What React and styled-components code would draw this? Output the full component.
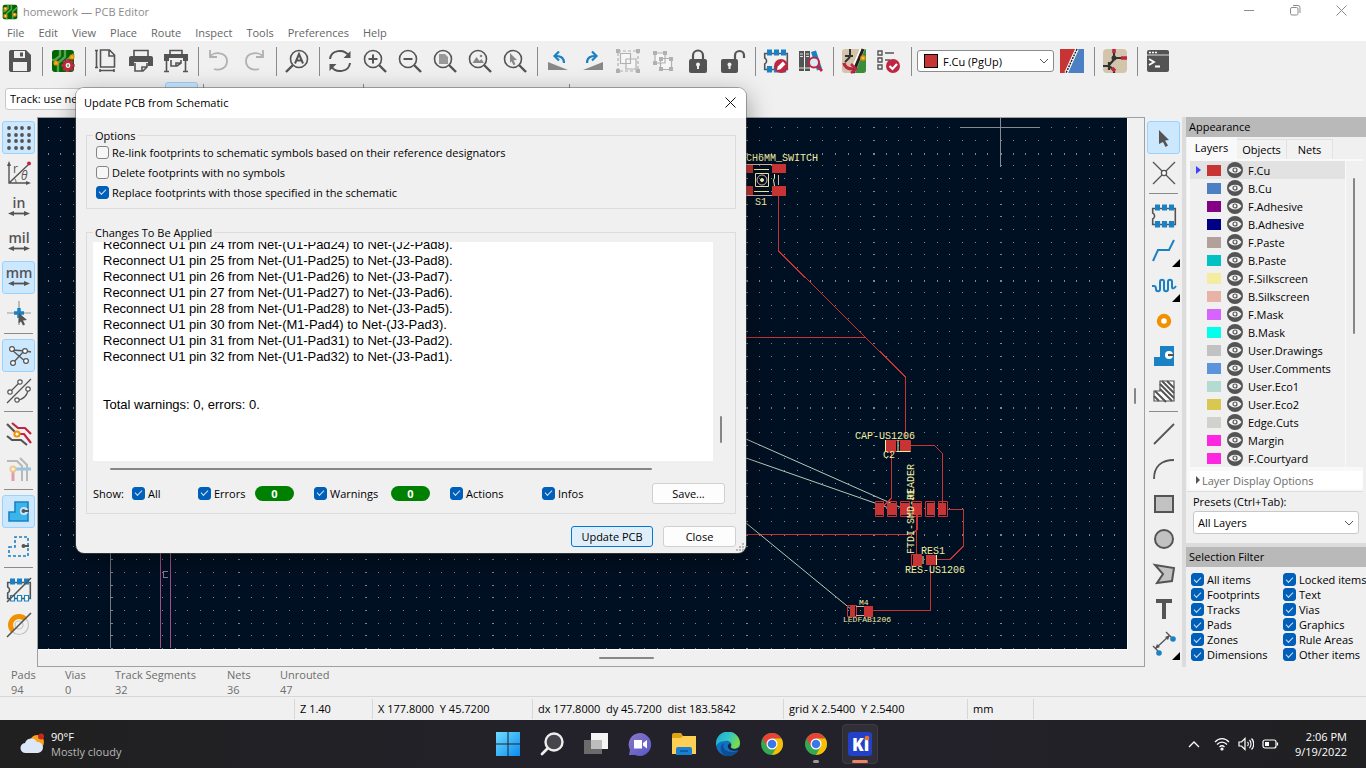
import React from "react";
import styled, { createGlobalStyle, css } from "styled-components";

const ui = `"Open Sans", "Noto Sans", "Liberation Sans", sans-serif`;
const ink = "#545454";
const blue = "#1a81c4";
const red = "#bf2641";
const orange = "#f29100";

const Global = createGlobalStyle`
  *, *::before, *::after { box-sizing: border-box; }
  body { margin: 0; background: #f0f0f0; font: 11px/15px ${ui}; color: #000; }
  button, select, input { font: inherit; color: inherit; margin: 0; }
  ul { list-style: none; margin: 0; padding: 0; }
`;

const Shell = styled.div`
  position: relative;
  display: flex;
  flex-direction: column;
  min-height: 100vh;
  overflow: hidden;
`;

/* ---------- window chrome ---------- */
const TitleBar = styled.header`
  display: flex;
  align-items: center;
  gap: 5px;
  height: 24px;
  padding: 0 2px 1px;
  background: #fff;
  color: #8c8c8c;
`;
const TitleText = styled.span`flex: 1;`;
const Caption = styled.button`
  width: 46px;
  height: 22px;
  padding: 0;
  border: 0;
  background: none;
  svg { display: block; margin: 0 auto; }
`;
const MenuBar = styled.nav`
  display: flex;
  gap: 14px;
  height: 17px;
  padding-left: 7px;
  background: #fff;
`;
const MenuItem = styled.a`
  color: #666;
  text-decoration: none;
  line-height: 17px;
`;

/* ---------- toolbars ---------- */
const TopBar = styled.div`
  display: flex;
  align-items: center;
  height: 40px;
  padding-left: 2px;
`;
const SecondBar = styled.div`
  display: flex;
  align-items: center;
  height: 36px;
  padding: 0 0 1px 5px;
`;
const SideBar = styled.div`
  display: flex;
  flex-direction: column;
  align-items: center;
  flex: none;
  width: 37px;
  padding-top: 3px;
`;
const Tool = styled.button`
  position: relative;
  display: flex;
  align-items: center;
  justify-content: center;
  flex: none;
  width: ${(p) => (p.$side ? 33 : 35)}px;
  height: ${(p) => (p.$side ? 33 : 35)}px;
  margin: ${(p) => (p.$side ? "1px 0" : 0)};
  padding: 0;
  border: 1px solid ${(p) => (p.$on ? "#99d1ff" : "transparent")};
  border-radius: 3px;
  background: ${(p) => (p.$on ? "#cce8ff" : "none")};
  opacity: ${(p) => (p.$dim ? 0.4 : 1)};
  svg { overflow: visible; }
`;
const More = styled.i`
  position: absolute;
  right: -1px;
  bottom: -1px;
  border: 4px solid #000;
  border-top-color: transparent;
  border-left-color: transparent;
`;
const Sep = styled.i`
  flex: none;
  ${(p) =>
    p.$side
      ? css`width: 29px; height: 8px; border-top: 1px solid #8b8b8b; margin: 3px 0 -3px;`
      : css`width: 8px; height: 29px; border-left: 1px solid #8b8b8b; margin: 0 -5px 0 5px;`}
`;
const Combo = styled.label`
  position: relative;
  display: flex;
  align-items: center;
  width: ${(p) => p.$w || "auto"};
  height: ${(p) => p.$h || 22}px;
  margin: ${(p) => p.$m || 0};
  padding: 0 4px;
  background: #fff;
  border: 1px solid ${(p) => p.$edge || "#c8c8c8"};
  border-radius: 3px;
  select {
    flex: 1;
    min-width: 0;
    padding: 0;
    border: 0;
    outline: 0;
    appearance: none;
    background: none;
  }
`;
const Well = styled.i`
  width: 14px;
  height: 14px;
  margin: 0 5px 0 2px;
  background: #c83434;
  border: 1px solid #000;
`;

/* ---------- work area ---------- */
const Work = styled.main`
  display: flex;
  flex: 1;
`;
const Frame = styled.section`
  display: grid;
  grid-template: minmax(0, 1fr) 17px / minmax(0, 1fr) 17px;
  flex: 1;
  min-width: 0;
  border: 1px solid #a0a0a0;
`;
const Board = styled.svg`
  display: block;
  width: 100%;
  height: 100%;
  min-height: 0;
  background: #001023;
  box-shadow: 1px 1px 0 #fff;
  contain: size;
`;
const ScrollTrack = styled.div`
  display: flex;
  align-items: center;
  justify-content: center;
  padding: ${(p) => p.$pad || 0};
`;
const Thumb = styled.i`
  width: ${(p) => p.$w || 2}px;
  height: ${(p) => p.$h || 2}px;
  border-radius: 1px;
  background: #868686;
`;

/* ---------- right panel ---------- */
const Panel = styled.aside`
  flex: none;
  width: 184px;
  border-left: 4px solid #dcdcdc;
`;
const PanelHead = styled.h2`
  height: 20px;
  margin: 0;
  padding-left: 3px;
  font: 11px/20px ${ui};
  background: #b9b9b9;
`;
const Tabs = styled.div`
  display: flex;
  align-items: flex-end;
  height: 22px;
  padding-left: 1px;
`;
const Tab = styled.button`
  height: ${(p) => (p.$on ? 22 : 20)}px;
  padding: 0 0 ${(p) => (p.$on ? 3 : 0)}px;
  width: ${(p) => p.$w}px;
  border: 1px solid ${(p) => (p.$on ? "#f9f9f9" : "#e2e2e2")};
  border-width: 1px 1px 0 0;
  background: ${(p) => (p.$on ? "#f9f9f9" : "#f2f2f2")};
`;
const Page = styled.div`
  margin: 0 3px 0 1px;
  padding: 2px 0 2px 3px;
  background: #f9f9f9;
  border-bottom: 1px solid #dcdcdc;
`;
const LayerArea = styled.div`
  display: grid;
  grid-template-columns: 1fr 17px;
  gap: 1px;
`;
const LayerTrack = styled.div`
  padding: 17px 0 0 7px;
  background: #f0f0f0;
  i { display: block; }
`;
const LayerRow = styled.li`
  display: grid;
  grid-template-columns: 17px 20px 21px 1fr;
  align-items: center;
  height: 18px;
  background: ${(p) => (p.$on ? "#e2e2e2" : "#f0f0f0")};
`;
const Pointer = styled.i`
  margin-left: 6px;
  width: 5px;
  height: 8px;
  background: #4040ff;
  clip-path: polygon(0 0, 100% 50%, 0 100%);
`;
const Swatch = styled.i`
  grid-column: 2;
  width: 14px;
  height: 11px;
  background: ${(p) => p.$c};
`;
const Eye = styled.button`
  padding: 0;
  border: 0;
  height: 16px;
  background: none;
  svg { display: block; }
`;
const Disclosure = styled.button`
  display: flex;
  align-items: center;
  gap: 2px;
  width: 100%;
  height: 18px;
  margin-top: 4px;
  padding: 0 0 0 6px;
  border: 0;
  background: #fff;
  color: #6d6d6d;
`;
const Presets = styled.div`
  padding: 2px 7px 9px 7px;
  border-bottom: 4px solid #dcdcdc;
  p { margin: 0 0 2px; }
`;
const Filters = styled.div`
  display: grid;
  grid-template-columns: 92px auto;
  padding: 5px 0 0 5px;
`;

const Check = styled.label`
  display: flex;
  align-items: center;
  gap: 3px;
  height: ${(p) => p.$h || 15}px;
  white-space: nowrap;
`;
const Box = styled.input.attrs({ type: "checkbox" })`
  appearance: none;
  display: grid;
  place-items: center;
  flex: none;
  width: 13px;
  height: 13px;
  border: 1px solid #858585;
  border-radius: 3px;
  background: #f6f6f6;
  &:checked { border-color: #005fb8; background: #005fb8; }
  &:checked::after {
    content: "";
    width: 7px;
    height: 4px;
    margin-bottom: 2px;
    border: solid #cfe3f5;
    border-width: 0 0 1px 1px;
    transform: rotate(-45deg);
  }
`;

/* ---------- dialog ---------- */
const Dialog = styled.section`
  position: absolute;
  left: 76px;
  top: 88px;
  width: 670px;
  background: #f0f0f0;
  border-radius: 8px;
  overflow: hidden;
  box-shadow: 0 0 0 1px rgba(90, 90, 90, 0.5), 0 8px 24px 2px rgba(0, 0, 0, 0.35);
`;
const DialogTitle = styled.div`
  display: flex;
  align-items: center;
  justify-content: space-between;
  height: 30px;
  padding: 0 8px 2px;
  background: #fff;
  button { width: 16px; height: 16px; padding: 0; border: 0; background: none; }
  svg { display: block; margin: 0 auto; }
`;
const Group = styled.fieldset`
  margin: ${(p) => p.$m};
  padding: 0 6px ${(p) => p.$pb}px;
  border: 1px solid #dcdcdc;
  legend { padding: 0 2px; line-height: 15px; }
`;
const Options = styled.div`
  margin-top: -1px;
  padding: 0 3px;
`;
const Report = styled.div`
  display: flex;
  flex-direction: column;
  justify-content: flex-end;
  height: 219px;
  padding: 0 10px 48px;
  overflow: hidden;
  background: #fff;
  font: 13px/16px "Liberation Sans", Arial, sans-serif;
  p { flex: none; height: 16px; margin: 0; }
`;
const ReportGrid = styled.div`
  display: grid;
  grid-template-columns: 1fr 16px;
  padding: 2px 0 0;
`;
const FilterRow = styled.div`
  display: grid;
  grid-template-columns: 39px 66px 57px 59px 77px 59px 92px 1fr 73px;
  align-items: center;
  height: 22px;
  margin-top: 7px;
  padding-right: 4px;
`;
const Pill = styled.b`
  width: 39px;
  height: 15px;
  border-radius: 8px;
  background: #008000;
  color: #fff;
  text-align: center;
`;
const Push = styled.button`
  width: ${(p) => p.$w || 73}px;
  height: 21px;
  padding: 0;
  border: 1px solid ${(p) => (p.$primary ? "#0078d4" : "#d0d0d0")};
  border-radius: 3px;
  background: ${(p) => (p.$primary ? "#e0eef9" : "#fdfdfd")};
`;
const Actions = styled.div`
  display: flex;
  justify-content: flex-end;
  gap: 10px;
  padding: 12px 10px 6px;
`;
const Grip = styled.svg`
  position: absolute;
  right: 2px;
  bottom: 2px;
`;

/* ---------- status ---------- */
const Stats = styled.dl`
  display: grid;
  grid-template-columns: 54px 50px 112px 53px auto;
  height: 30px;
  margin: 0;
  padding-left: 11px;
  border-bottom: 1px solid #d7d7d7;
  color: #6d6d6d;
  dd { margin: 0; }
  div { height: 29px; }
`;
const Status = styled.footer`
  display: flex;
  height: 23px;
  padding-top: 2px;
`;
const Field = styled.span`
  width: ${(p) => p.$w}px;
  flex: ${(p) => (p.$w ? "none" : 1)};
  height: 20px;
  padding-left: 5px;
  border-right: 1px solid #d7d7d7;
  line-height: 20px;
  white-space: pre;
  &:last-child { border: 0; }
`;

/* ---------- taskbar ---------- */
const Taskbar = styled.footer`
  display: grid;
  grid-template-columns: 1fr auto 1fr;
  align-items: center;
  height: 48px;
  background: linear-gradient(90deg, #202020, #23222a 40%, #23222a 70%, #202022);
  color: #fff;
`;
const Weather = styled.div`
  display: flex;
  align-items: center;
  gap: 7px;
  padding-left: 20px;
  span { display: block; }
  span + span { color: #b8b8b8; }
`;
const Apps = styled.div`
  display: flex;
  padding-left: 2px;
`;
const AppTile = styled.button`
  position: relative;
  width: 44px;
  height: 48px;
  padding: 0;
  border: 0;
  background: none;
  svg { display: block; position: relative; margin: 0 auto; }
  ${(p) => p.$active && css`
    &::before {
      content: "";
      position: absolute;
      inset: 4px 4px;
      border: 1px solid #3c3b43;
      border-radius: 4px;
      background: #302f38;
    }
  `}
  &::after {
    content: "";
    position: absolute;
    left: 50%;
    bottom: 5px;
    width: ${(p) => p.$run || 0}px;
    margin-left: -${(p) => (p.$run || 0) / 2}px;
    height: 3px;
    border-radius: 2px;
    background: ${(p) => (p.$active ? "#f08163" : "#9a9a9e")};
  }
`;
const Tray = styled.div`
  display: flex;
  align-items: center;
  justify-content: flex-end;
  gap: 8px;
  padding-right: 19px;
  svg:first-child { margin-right: 6px; }
`;
const Clock = styled.time`
  margin-left: 8px;
  text-align: right;
  span { display: block; }
`;

/* ---------- icons ---------- */
const Svg = ({ children }) => (
  <svg width="24" height="24" viewBox="0 0 24 24" fill="none" stroke={ink} strokeWidth="1.6" aria-hidden="true">
    {children}
  </svg>
);
const Chevron = () => (
  <svg width="10" height="6" viewBox="0 0 10 6" fill="none" stroke="#555" aria-hidden="true">
    <path d="M1 1l4 4 4-4" />
  </svg>
);
const BoardTile = ({ children }) => (
  <>
    <rect x="1" y="1" width="22" height="22" rx="3" fill="#006400" stroke="none" />
    <path d="M9 1v6l-5 4H1M14 1v7l-7 6v9M23 5l-7 6v12" stroke="#52a352" strokeWidth="2.4" />
    {children}
  </>
);
const Lens = ({ children }) => (
  <>
    <circle cx="10" cy="10" r="8.500" />
    <path d="M16 16l7 7" strokeWidth="2.4" />
    {children}
  </>
);
const Pads = ({ lower = blue }) => (
  <>
    <path d="M3 4.500H.7v4.500c2.500 1 2.500 5 0 6v5.500H23.300V4.500z" />
    <path d="M3 .5h5v6H3zM10 .5h5v6h-5zM17 .5h5v6h-5z" fill={blue} stroke="none" />
    <path d="M3.500 17.500h4v5.500h-4zM10.500 17.500h4v5.500h-4zM17.500 17.500h4v5.500h-4z" fill={lower} stroke={blue} strokeWidth="1.200" />
  </>
);
const UnitIcon = ({ text }) => (
  <Svg>
    <text x="12" y="12" textAnchor="middle" fontFamily="Open Sans" fontSize="14" fontWeight="600" fill={ink} stroke="none">{text}</text>
    <path d="M5 17.500h14" strokeWidth="1.800" />
    <path d="M1 17.500l6-2.500v5zM23 17.500l-6-2.500v5z" fill={ink} stroke="none" />
  </Svg>
);
const dot = (x, y, r = 2.3, c = orange) => <circle cx={x} cy={y} r={r} stroke={c} strokeWidth="2" fill="#fff" />;
const gear = Array.from({ length: 8 }, (_, i) => {
  const a = (i * Math.PI) / 4;
  return `M${17 + 4 * Math.cos(a)} ${16.5 + 4 * Math.sin(a)}L${17 + 6.6 * Math.cos(a)} ${16.5 + 6.6 * Math.sin(a)}`;
}).join("");

const I = {
  save: <Svg><path d="M1 3a2 2 0 012-2h15l5 5v15a2 2 0 01-2 2H3a2 2 0 01-2-2z" fill={ink} stroke="none" /><path d="M6 2h11v7H6zM5 13h14v9H5z" fill="#f0f0f0" stroke="none" /><path d="M12 3.500h3v4h-3z" fill={ink} stroke="none" /></Svg>,
  setup: <Svg><BoardTile>{dot(5, 14, 1.6)}{dot(21, 8, 1.6)}<path d={gear} stroke={red} strokeWidth="3" /><circle cx="17" cy="16.500" r="3.700" fill="#fff" stroke={red} strokeWidth="2.600" /><circle cx="17" cy="16.500" r="1.200" fill="#52a352" stroke="none" /></BoardTile></Svg>,
  page: <Svg><path d="M6.500 1h9l5 5v12h-14zM15 1v6h6M1 1.500h3M2.500 1v18M1 18.500h3M6 20v3M20 20v3M6 21.500h14" /></Svg>,
  print: <Svg><path d="M5 7V1.500h14V7M6 14v8h8l4-4v-4" /><path d="M0 9a2 2 0 012-2h20a2 2 0 012 2v8h-5v-4H5v4H0z" fill={ink} stroke="none" /><path d="M13 22v-4h5" /></Svg>,
  plot: <Svg><path d="M6 6V1.500h12V6M7 11v6h6l4-3v-3M2.500 12v10M21.500 12v10M0 22.500h5M19 22.500h5M12 17v-3h5" /><path d="M0 5h24v7h-5V9H5v3H0z" fill={ink} stroke="none" /></Svg>,
  undo: <Svg><path d="M3 1v7h7M3 8c3-6 17-5 17 4 0 7-7 10-13 8" strokeWidth="1.800" /></Svg>,
  redo: <Svg><path d="M21 1v7h-7M21 8C18 2 4 3 4 12c0 7 7 10 13 8" strokeWidth="1.800" /></Svg>,
  find: <Svg><circle cx="14" cy="10" r="8.500" /><path d="M8 16l-7 7" strokeWidth="2.400" /><path d="M10 14.500L14 5l4 9.500M11.500 11.500h5" strokeWidth="2" /></Svg>,
  refresh: <Svg><path d="M2 10C3 1 16-1 21 7M22 14c-1 9-14 11-19 3" strokeWidth="2" /><path d="M22.500 2v7h-7zM1.500 22v-7h7z" fill={ink} stroke="none" /></Svg>,
  zin: <Svg><Lens><path d="M10 5.500v9M5.500 10h9" strokeWidth="2" /></Lens></Svg>,
  zout: <Svg><Lens><path d="M5.500 10h9" strokeWidth="2" /></Lens></Svg>,
  zfit: <Svg><Lens><path d="M6 5h6l3 3v7H6z" fill="#999" stroke="none" /></Lens></Svg>,
  zobj: <Svg><Lens><path d="M4.500 14l4-6 3 4 2-2 2.500 4z" fill="#888" stroke="none" /><circle cx="13" cy="7" r="1.300" fill="#888" stroke="none" /></Lens></Svg>,
  zsel: <Svg><Lens><path d="M7 4l7 7-3.500.3 2 4-2 1-2-4L7 14z" fill="#888" stroke="none" /></Lens></Svg>,
  ccw: <Svg><path d="M2 13v8h20z" fill="#888" stroke="none" /><path d="M18 14c0-6-4-7-9-7" stroke={blue} strokeWidth="2.200" /><path d="M13 2.500L8.500 7l4.500 4.500" stroke={blue} strokeWidth="2.200" /></Svg>,
  cw: <Svg><path d="M22 13v8H2z" fill="#888" stroke="none" /><path d="M6 14c0-6 4-7 9-7" stroke={blue} strokeWidth="2.200" /><path d="M11 2.500L15.500 7 11 11.500" stroke={blue} strokeWidth="2.200" /></Svg>,
  group: <Svg><path d="M2 2h20v20H2z" strokeDasharray="3 2" strokeWidth="1.200" /><path d="M4.500 4.500h10v10h-10zM10 10h10v10H10z" fill="#fff" strokeWidth="1.200" /><path d="M0 0h4v4H0zM20 0h4v4h-4zM0 20h4v4H0zM20 20h4v4h-4z" fill={ink} stroke="none" /></Svg>,
  ungroup: <Svg><path d="M4 4h10v10H4zM9.500 9.500h11v11h-11z" fill="#fff" strokeWidth="1.200" /><path d="M2 2h4v4H2zM12 2h4v4h-4zM2 12h4v4H2zM8 8h4v4H8zM18 8h4v4h-4zM8 18h4v4H8zM18 18h4v4h-4z" fill={ink} stroke="none" /></Svg>,
  lock: <Svg><path d="M7 11V6.500a5 5 0 0110 0V11" strokeWidth="2.200" /><rect x="3" y="10" width="18" height="14" rx="2" fill={ink} stroke="none" /><path d="M12 15v5" stroke="#f0f0f0" strokeWidth="2" /><circle cx="12" cy="15.500" r="2" fill="#f0f0f0" stroke="none" /></Svg>,
  unlock: <Svg><path d="M14 11V6.500a4.500 4.500 0 019 0V9" strokeWidth="2.200" /><rect x="0" y="10" width="17" height="14" rx="2" fill={ink} stroke="none" /><path d="M8.500 15v5" stroke="#f0f0f0" strokeWidth="2" /><circle cx="8.500" cy="15.500" r="2" fill="#f0f0f0" stroke="none" /></Svg>,
  fpedit: <Svg><Pads /><circle cx="17" cy="17" r="7" fill={red} stroke="none" /><path d="M13 21l.8-3.500 5-5 2.700 2.700-5 5z" fill="#fff" stroke="none" /></Svg>,
  library: <Svg><path d="M0 2h5v20H0zM6 2h5v20H6z" fill={ink} stroke="none" /><path d="M1 5h3M1 7.500h3M7 5h3M7 7.500h3M0 19h5M6 19h5" stroke="#ddd" strokeWidth="1" /><path d="M12 3l5-1.500 6 18-5 2z" fill={blue} stroke="none" /><circle cx="15" cy="13.500" r="5" fill="#dcecf7" stroke={red} strokeWidth="2" /><path d="M18.500 17l4.500 5" stroke={red} strokeWidth="2.800" /></Svg>,
  update: <Svg><rect width="24" height="24" rx="3" fill="#d2c5ab" stroke="none" /><path d="M13 24L23 0a1 1 0 011 1v20a3 3 0 01-3 3z" fill="#3a8e3a" stroke="none" /><path d="M8 0v8M3 7h8M8 8l-5 5" stroke="#333" strokeWidth="2" /><path d="M21 0L11 24" stroke="#222" strokeWidth="3" /><path d="M18.500 0L9 22" stroke="#fff" strokeWidth="1.500" />{dot(21, 9, 1.700)}<path d="M2 14c1 5 4 6 9 6" stroke={red} strokeWidth="3.500" /><path d="M9 15l5 5-5 4" stroke={red} strokeWidth="2.500" /></Svg>,
  drc: <Svg><path d="M1 2h4v4H1zM1 9h4v4H1zM1 16h4v4H1zM8 4h9M8 11h5" strokeWidth="1.400" /><circle cx="16" cy="17" r="7" fill={red} stroke="none" /><path d="M12.500 17l3 3 4.500-5" stroke="#fff" strokeWidth="2.200" /></Svg>,
  pair: <Svg><path d="M0 0h16L5 24H0z" fill="#c83434" stroke="none" /><path d="M18 0h6v24H8z" fill="#4d7fc4" stroke="none" /><path d="M17 0L6 24" stroke="#fff" strokeWidth="3.500" /><path d="M17 0L6 24" stroke="#222" strokeWidth="1.500" strokeDasharray="2 1" /></Svg>,
  sch: <Svg><rect width="24" height="24" rx="4" fill="#d2c5ab" stroke="none" /><path d="M11 0v9h13M11 9c0 4-5 5-5 8M0 17h6M6 13v8M6 17l5 4v3" stroke="#333" strokeWidth="2.200" /><circle cx="11" cy="9" r="2.500" fill="#333" stroke="none" /><path d="M11 0v4M18 9h6M9 19l3 3" stroke={red} strokeWidth="3.500" /></Svg>,
  console: <Svg><rect x="1" y="1" width="22" height="22" rx="2" fill={ink} stroke="none" /><path d="M1 6h22" stroke="#ddd" strokeWidth="1" /><path d="M3 3.500h2M6 3.500h2M9 3.500h2" stroke="#fff" /><path d="M3 10l5 3-5 3M9 17.500h5" stroke="#fff" strokeWidth="1.800" /></Svg>,

  grid: <Svg>{[2, 9, 15, 22].map((y) => [2, 9, 15, 22].map((x) => <circle key={x + "-" + y} cx={x} cy={y} r="1.900" fill={ink} stroke="none" />))}</Svg>,
  polar: <Svg><path d="M2 3v19h20M2 22L21 4" strokeWidth="1.400" /><path d="M0 5l2-5 2 5zM19 20l5 2-5 2z" fill={ink} stroke="none" /><circle cx="22" cy="2.500" r="2" fill={red} stroke="none" /><path d="M7 17c2 2 2 3 2 5" strokeWidth="1" /><text x="6" y="12" fontFamily="Open Sans" fontSize="12" fill={ink} stroke="none">r</text><text x="14" y="19" fontFamily="Open Sans" fontSize="12" fontStyle="italic" fill={ink} stroke="none">θ</text></Svg>,
  inch: <UnitIcon text="in" />,
  mil: <UnitIcon text="mil" />,
  mm: <UnitIcon text="mm" />,
  cursor: <Svg><path d="M12 0v24M0 12h24" stroke="#999" strokeWidth="1.200" /><path d="M12 7v10M7 12h10" stroke={blue} strokeWidth="3.500" /><path d="M12 12l8 7-4 .5 2 4-2 1-2-4-2.500 2z" fill={ink} stroke="none" /></Svg>,
  rats: <Svg><path d="M5 6l14 12M5 6l14 1 5 1M6 19L17 7" strokeWidth="1.300" /><circle cx="5" cy="5" r="2.400" fill="#fff" strokeWidth="1.200" /><circle cx="18" cy="7" r="2.400" fill="#fff" strokeWidth="1.200" /><circle cx="6" cy="19" r="2.400" fill="#fff" strokeWidth="1.200" /><circle cx="19" cy="17" r="2.400" fill="#fff" strokeWidth="1.200" /></Svg>,
  curved: <Svg><path d="M0 24L24 0M3 13L13 3M10 21c6 0 11-5 11-11" strokeWidth="1.300" /><circle cx="3" cy="13" r="2.200" fill="#fff" strokeWidth="1.200" /><circle cx="13" cy="3" r="2.200" fill="#fff" strokeWidth="1.200" /><circle cx="10" cy="21" r="2.200" fill="#fff" strokeWidth="1.200" /><circle cx="21" cy="10" r="2.200" fill="#fff" strokeWidth="1.200" /></Svg>,
  netcolor: <Svg><path d="M0 2l8 8M0 14l5 4h9l6 5" strokeWidth="2.200" /><path d="M5 1l6 5h7l6 6M12 12h5l7 9" stroke={red} strokeWidth="2.200" />{dot(10, 12, 2.600)}</Svg>,
  fade: <Svg><path d="M0 4h10l5 5v15M13 1l7 7v16" stroke="#666" strokeWidth="2" /><path d="M6 12v12" stroke={red} strokeWidth="3" /><path d="M8 12h16" stroke={blue} strokeWidth="3" />{dot(6, 12, 2.600)}</Svg>,
  zone: <Svg><path d="M2 12h6V2h13v7c-8-3-8 6 0 4v8H2z" fill="#3bb4ea" stroke={blue} /><circle cx="17" cy="11" r="4" fill="#cce8ff" stroke="none" /><path d="M16 11h6" strokeWidth="2" /><circle cx="16.500" cy="11" r="2" fill={ink} stroke="none" /></Svg>,
  zoneout: <Svg><path d="M2 12h6V2h13v19H2z" stroke={blue} strokeDasharray="3 2" /><path d="M16 11h6" strokeWidth="2" /><circle cx="16.500" cy="11" r="2" fill={ink} stroke="none" /></Svg>,
  padmode: <Svg><Pads lower="#fff" /><path d="M0 24L24 0" /></Svg>,
  viamode: <Svg><circle cx="12" cy="12" r="9.500" stroke="#c4c4c4" strokeWidth="1.200" /><path d="M6 18A8 8 0 0118 6" stroke={orange} strokeWidth="5" /><circle cx="12" cy="12" r="4" fill="#f0f0f0" stroke="#c4c4c4" strokeWidth="1.200" /><path d="M0 24L24 0" /></Svg>,

  select: <Svg><path d="M7 4l10 10-4 .5 3 5-2.500 1.500-2.500-5L7 18z" fill={ink} stroke="none" /></Svg>,
  local: <Svg><path d="M1 1l22 22M23 1L1 23" strokeWidth="1.300" /><circle cx="12" cy="12" r="2.600" fill="#fff" strokeWidth="1.300" /></Svg>,
  footprint: <Svg><Pads /></Svg>,
  route: <Svg><path d="M1 22l5-11h11l5-10" stroke={blue} strokeWidth="2" /></Svg>,
  tune: <Svg><path d="M0 12h2c2 0 2 2 2 3 0 3 4 3 4 0V8c0-3 4-3 4 0v7c0 3 4 3 4 0V8c0-3 4-3 4 0v5c0 2 2 2 4-1" stroke={blue} strokeWidth="2" /></Svg>,
  via: <Svg><circle cx="12" cy="12" r="5" stroke={orange} strokeWidth="4.400" fill="#fff" /></Svg>,
  zonefill: <Svg><path d="M2 13h6V2h14v20H2z" fill={blue} stroke="none" /><circle cx="17" cy="11" r="4" fill="#fff" stroke="none" /><path d="M16 11h6" strokeWidth="2.200" /></Svg>,
  keepout: <Svg><path d="M2 12h6V2h14v20H2z" fill="#fff" strokeWidth="1.200" /><path d="M10 2l12 12M15 2l7 7M8 5l14 14M8 10l12 12M3 12l11 11M2 17l5 5" strokeWidth="2" /></Svg>,
  line: <Svg><path d="M2 22L22 2" strokeWidth="1.800" /></Svg>,
  arc: <Svg><path d="M2 22C2 10 9 3 22 3" strokeWidth="1.800" /></Svg>,
  rect: <Svg><path d="M3 4h18v16H3z" fill="#c2c2c2" strokeWidth="2" /></Svg>,
  circle: <Svg><circle cx="12" cy="12" r="9" fill="#c2c2c2" strokeWidth="2" /></Svg>,
  poly: <Svg><path d="M3 3l19 3-2 13-15 2 6-9z" fill="#c2c2c2" strokeWidth="2" /></Svg>,
  text: <Svg><path d="M4 2h16v4h-6v16h-4V6H4z" fill={ink} stroke="none" /></Svg>,
  dim: <Svg><path d="M1 14l5 5M14 0l7 7M4 16L17 4" strokeWidth="1.300" /><path d="M3 17l2-5 3 3zM18 3l-5 2 3 3z" fill={ink} stroke="none" /><circle cx="21" cy="7" r="2.800" fill={blue} stroke="none" /><circle cx="7" cy="21" r="2.800" fill={blue} stroke="none" /></Svg>,
};

const ChromeLogo = () => (
  <svg width="24" height="24" viewBox="0 0 24 24" aria-hidden="true">
    <circle cx="12" cy="12" r="11" fill="#34a853" />
    <path d="M2.500 6.500A11 11 0 0121.500 6.500H12l-4.800 8.300z" fill="#e94335" />
    <path d="M21.500 6.500A11 11 0 0112 23l4.800-8.300L12 6.500z" fill="#fbbc04" />
    <circle cx="12" cy="12" r="5.500" fill="#fff" />
    <circle cx="12" cy="12" r="4.300" fill="#3b78e7" />
  </svg>
);

const T = {
  start: <svg width="24" height="24" viewBox="0 0 24 24"><defs><linearGradient id="win" x2="1" y2="1"><stop stopColor="#6fdcff" /><stop offset="1" stopColor="#0a8cf0" /></linearGradient></defs><path d="M0 0h11.500v11.500H0zM12.500 0H24v11.500H12.500zM0 12.500h11.500V24H0zM12.500 12.500H24V24H12.500z" fill="url(#win)" /></svg>,
  search: <svg width="24" height="24" viewBox="0 0 24 24" fill="none" stroke="#eee"><circle cx="14" cy="10" r="8.500" strokeWidth="2.400" fill="#46454c" /><path d="M7.500 16.500L2 22" strokeWidth="2.800" strokeLinecap="round" /></svg>,
  tasks: <svg width="24" height="24" viewBox="0 0 24 24"><path d="M7 1h17v16H7z" fill="#f5f5f5" /><path d="M0 8h18v14H0z" fill="#6b6b6b" /><path d="M7 8h11v9H7z" fill="#bdbdbd" /></svg>,
  chat: <svg width="24" height="24" viewBox="0 0 24 24"><defs><linearGradient id="chat" x2="1" y2="1"><stop stopColor="#8c78c8" /><stop offset="1" stopColor="#5558c8" /></linearGradient></defs><path d="M12 1a11.500 11.500 0 11-5 22H1l1-5A11.500 11.500 0 0112 1z" fill="url(#chat)" /><path d="M6 8h8v8.500H6zM15 11l4-3v8.500l-4-3z" fill="#fff" /></svg>,
  files: <svg width="26" height="24" viewBox="0 0 26 24"><path d="M1 3a2 2 0 012-2h7l2 3h12v6H1z" fill="#e0a312" /><path d="M1 6h9l2-2h13v18H1z" fill="#fdd055" /><path d="M5 17a2 2 0 012-2h12a2 2 0 012 2v6H5z" fill="#1880d0" /><path d="M9 18h8v2H9z" fill="#0d5fa8" /></svg>,
  edge: <svg width="24" height="24" viewBox="0 0 24 24"><defs><linearGradient id="edgeTop" x2="1" y2=".4"><stop stopColor="#1aa5dc" /><stop offset=".6" stopColor="#35c8c0" /><stop offset="1" stopColor="#78dc48" /></linearGradient></defs><circle cx="12" cy="12" r="12" fill="#1170c4" /><path d="M0 12A12 12 0 0124 11c0 6-8 7-9 4 2-4-2-7-6-6-5 0-8 3-9 5z" fill="url(#edgeTop)" /><path d="M8 11c-3 6 4 11 14 8-4 5-10 6-14 4-5-4-4-10 0-12z" fill="#0c4f97" /><path d="M14 11c2 2 0 4 1 5 3 2 6 1 9-1l-1 3c-8 2-12-1-11-5z" fill="#23222a" /></svg>,
  chrome: <ChromeLogo />,
  kicad: <svg width="24" height="24" viewBox="0 0 24 24"><rect width="24" height="24" rx="3" fill="#2340c8" /><text x="4" y="19" fontFamily="Open Sans" fontSize="17" fontWeight="800" fill="#fff">Ki</text><circle cx="19" cy="6" r="2.300" fill="#f07814" /></svg>,
};

/* ---------- data ---------- */
const menus = ["File", "Edit", "View", "Place", "Route", "Inspect", "Tools", "Preferences", "Help"];
const top1 = ["save", "|", "setup", "|", "page", "print", "plot", "|", "-undo", "-redo", "|", "find", "|", "refresh", "zin", "zout", "zfit", "zobj", "zsel", "|", "ccw", "cw", "-group", "-ungroup", "lock", "unlock", "|", "fpedit", "library", "|", "update", "drc", "|"];
const top2 = ["pair", "|", "sch", "|", "console"];
const left = ["+grid", "polar", "inch", "mil", "+mm", "cursor", "|", "+rats", "curved", "|", "netcolor", "-fade", "|", "+zone", "zoneout", "|", "padmode", "viamode"];
const right = ["+select", "local", "|", "footprint", "route>", "tune>", "via", "zonefill", "keepout", "|", "line", "arc", "rect", "circle", "poly", "text", "dim>"];
const layers = [
  ["F.Cu", "#c83434"], ["B.Cu", "#4d7fc4"], ["F.Adhesive", "#840084"], ["B.Adhesive", "#000084"],
  ["F.Paste", "#b4a09a"], ["B.Paste", "#00c2c2"], ["F.Silkscreen", "#f2eda1"], ["B.Silkscreen", "#e8b2a7"],
  ["F.Mask", "#d864ff"], ["B.Mask", "#02ffee"], ["User.Drawings", "#c2c2c2"], ["User.Comments", "#5994dc"],
  ["User.Eco1", "#b4dbd2"], ["User.Eco2", "#d8c852"], ["Edge.Cuts", "#d0d2cd"], ["Margin", "#ff26e2"], ["F.Courtyard", "#ff26e2"],
];
const filters = ["All items", "Locked items", "Footprints", "Text", "Tracks", "Vias", "Pads", "Graphics", "Zones", "Rule Areas", "Dimensions", "Other items"];
const report = [
  "Reconnect U1 pin 24 from Net-(U1-Pad24) to Net-(J2-Pad8).",
  "Reconnect U1 pin 25 from Net-(U1-Pad25) to Net-(J3-Pad8).",
  "Reconnect U1 pin 26 from Net-(U1-Pad26) to Net-(J3-Pad7).",
  "Reconnect U1 pin 27 from Net-(U1-Pad27) to Net-(J3-Pad6).",
  "Reconnect U1 pin 28 from Net-(U1-Pad28) to Net-(J3-Pad5).",
  "Reconnect U1 pin 30 from Net-(M1-Pad4) to Net-(J3-Pad3).",
  "Reconnect U1 pin 31 from Net-(U1-Pad31) to Net-(J3-Pad2).",
  "Reconnect U1 pin 32 from Net-(U1-Pad32) to Net-(J3-Pad1).",
  "", "",
  "Total warnings: 0, errors: 0.",
];
const stats = [["Pads", 94], ["Vias", 0], ["Track Segments", 32], ["Nets", 36], ["Unrouted", 47]];

const tools = (names, side) =>
  names.map((n, i) => {
    if (n === "|") return <Sep key={i} $side={side} />;
    const id = n.replace(/[^a-z]/g, "");
    return (
      <Tool key={i} type="button" aria-label={id} $side={side} $on={n[0] === "+"} $dim={n[0] === "-"} disabled={n[0] === "-"}>
        {I[id]}
        {n.endsWith(">") && <More />}
      </Tool>
    );
  });

/* dots every 12.7 units, with longer marks on each tenth row and column */
const gridPath = () => {
  let d = "";
  for (let r = 0; r < 90; r++) {
    const y = Math.round(127.3 + r * 12.7);
    const h = (r - 2) % 10 === 0 ? 2 : 1;
    for (let c = -76; c < 120; c++) {
      const x = Math.round(1000 + c * 12.7);
      const w = c % 10 === 0 ? 2 : 1;
      d += `M${x} ${y}h${w}v${h}h-${w}z`;
    }
  }
  return d;
};
const dots = gridPath();

const PcbView = () => (
  <Board role="img" aria-label="Board">
    <g transform="translate(-38 -118)">
      <path d={dots} fill="#7f868c" shapeRendering="crispEdges" />
      <g fill="none" stroke="#c83434" strokeWidth="1" shapeRendering="crispEdges">
        <path d="M778.500 195v56l127 126v61" />
        <path d="M746 337.500h119" />
        <path d="M905.500 445.500h29l8 8v52M891.500 452v46l-8 8M947 509.500h16v37l-13 13h-14M746 534.500h166l5-5v-20M916.500 509v50M930.500 565v45.500h-60" />
      </g>
      <path d="M746 439l158 70M746 458l146 51M746 523l106 87" stroke="#b4c8b8" strokeWidth="1" fill="none" />
      <g fill="#c83434">
        <path d="M740 164h13v9h-13zM772 164h14v9h-14zM740 186h13v10h-13zM772 186h14v10h-14z" />
        <path d="M886 440h10v12h-10zM900 440h10v12h-10z" />
        <path d="M876 503h7v12h-7zM888 503h8v12h-8zM901 503h8v12h-8zM913 503h9v12h-9zM927 503h7v12h-7zM939 503h7v12h-7z" />
        <path d="M913 555h9v10h-9zM926 555h10v10h-10zM850 606h5v10h-5zM864 606h9v11h-9z" />
      </g>
      <g fill="none" stroke="#c83434">
        <path d="M875.500 501.500h8v15h-8zM887.500 501.500h9v15h-9zM900.500 501.500h9v15h-9zM912.500 501.500h9v15h-9zM925.500 501.500h9v15h-9zM938.500 501.500h9v15h-9zM847.500 605.500h9v11h-9zM911.500 554.500h10v11h-10zM885.500 440.500h25v11h-25z" />
      </g>
      <g fill="none" stroke="#f2eda1">
        <path d="M755.500 173.500h13v13h-13zM754 169.500h15M754 191.500h15M774.500 174v4l-1 2 1 6M885.500 440v11M896.500 451.500h14M898 440v12M923 556v8M936.500 555v10" />
        <circle cx="762" cy="180" r="5" stroke="#e8b2a7" />
        <circle cx="762" cy="180" r="1.500" fill="#f2eda1" />
        <path d="M746 164.500h26M746 195.500h26M778.500 175v10M856 606.500h8M856 615.500h8" stroke="#d8b0a0" />
      </g>
      <g fontFamily="Liberation Mono, monospace" fontSize="10" fill="#f2eda1">
        <text x="746" y="161">CH6MM_SWITCH</text>
        <text x="755" y="205">S1</text>
        <text x="855" y="439">CAP-US1206</text>
        <text x="883" y="458">C2</text>
        <text x="914" y="554" transform="rotate(-90 914 554)">FTDI-SMD-HEADER</text>
        <text x="914" y="501" transform="rotate(-90 914 501)">J1</text>
        <text x="921" y="554">RES1</text>
        <text x="905" y="573">RES-US1206</text>
        <g fontSize="8">
          <text x="859" y="605">M4</text>
          <text x="843" y="622">LEDFAB1206</text>
        </g>
      </g>
      <path d="M960 127.500h80M1000.500 118v49" stroke="#858b90" shapeRendering="crispEdges" />
      <g fill="none" shapeRendering="crispEdges">
        <path d="M110.500 540v108" stroke="#75797d" />
        <path d="M160.500 540v108M170.500 540v108" stroke="#a0508c" />
        <path d="M168 571.500h-5v6h5" stroke="#8c7a9a" />
      </g>
    </g>
  </Board>
);

const EyeIcon = () => (
  <svg width="16" height="16" viewBox="0 0 16 16" aria-hidden="true">
    <circle cx="8" cy="8" r="8" fill={ink} />
    <path d="M1.500 8C4 3.500 12 3.500 14.500 8 12 12.500 4 12.500 1.500 8z" fill="#f4f4f4" />
    <circle cx="8" cy="8" r="2" fill="#f4f4f4" stroke={ink} strokeWidth="1.200" />
  </svg>
);
const Cross = ({ c = "#111" }) => (
  <svg width="11" height="11" viewBox="0 0 11 11" stroke={c} aria-hidden="true"><path d="M.5.5l10 10M10.500.5l-10 10" /></svg>
);
const Ticked = ({ label, h, off }) => (
  <Check $h={h}><Box defaultChecked={!off} />{label}</Check>
);

export default function App() {
  return (
    <Shell>
      <Global />
      <TitleBar>
        <svg width="16" height="16" viewBox="0 0 24 24" fill="none" aria-hidden="true"><BoardTile>{dot(5, 7, 2)}{dot(5, 18, 2)}{dot(19, 16, 2)}</BoardTile></svg>
        <TitleText>homework — PCB Editor</TitleText>
        <div>
          <Caption type="button" aria-label="Minimize"><svg width="10" height="10" stroke="#8c8c8c"><path d="M0 5.500h10" /></svg></Caption>
          <Caption type="button" aria-label="Restore"><svg width="11" height="11" fill="none" stroke="#8c8c8c"><rect x=".5" y="2.500" width="7.500" height="7.500" rx="1.500" /><path d="M3 .5h5a2 2 0 012 2v5.500" /></svg></Caption>
          <Caption type="button" aria-label="Close window"><Cross c="#8c8c8c" /></Caption>
        </div>
      </TitleBar>
      <MenuBar>{menus.map((m) => <MenuItem key={m} href="#">{m}</MenuItem>)}</MenuBar>

      <TopBar>
        {tools(top1)}
        <Combo $w="137px" $m="0 0 0 3px" $edge="#8b8b8b">
          <Well />
          <select aria-label="Active layer"><option>F.Cu (PgUp)</option></select>
          <Chevron />
        </Combo>
        {tools(top2)}
      </TopBar>
      <SecondBar>
        <Combo $w="153px" $m="0 7px 0 0">
          <select aria-label="Track width"><option>Track: use netclass width</option></select>
          <Chevron />
        </Combo>
        <Tool type="button" aria-label="Use existing track width" $on $side />
        <Sep />
        <Combo $w="150px" $m="0 0 0 2px"><select aria-label="Via size"><option>Via: use netclass sizes</option></select></Combo>
        <Sep />
        <Combo $w="196px" $m="0 0 0 2px"><select aria-label="Grid"><option>Grid: 2.5400 mm</option></select></Combo>
        <Sep />
        <Combo $w="96px" $m="0 0 0 2px"><select aria-label="Zoom"><option>Zoom 1.40</option></select></Combo>
      </SecondBar>

      <Work>
        <SideBar>{tools(left, true)}</SideBar>
        <Frame>
          <PcbView />
          <ScrollTrack $pad="24px 1px 0 0"><Thumb $h={16} /></ScrollTrack>
          <ScrollTrack $pad="0 0 0 88px"><Thumb $w={55} /></ScrollTrack>
        </Frame>
        <SideBar>{tools(right, true)}</SideBar>
        <Panel>
          <PanelHead>Appearance</PanelHead>
          <Tabs role="tablist">
            <Tab role="tab" $on $w={50}>Layers</Tab>
            <Tab role="tab" $w={50}>Objects</Tab>
            <Tab role="tab" $w={46}>Nets</Tab>
          </Tabs>
          <Page>
            <LayerArea>
              <ul>
                {layers.map(([name, color], i) => (
                  <LayerRow key={name} $on={i === 0}>
                    {i === 0 && <Pointer />}
                    <Swatch $c={color} />
                    <Eye type="button" aria-label={`Show ${name}`}><EyeIcon /></Eye>
                    <span>{name}</span>
                  </LayerRow>
                ))}
              </ul>
              <LayerTrack><Thumb $h={156} /></LayerTrack>
            </LayerArea>
            <Disclosure type="button">
              <svg width="4" height="8" aria-hidden="true"><path d="M0 0l4 4-4 4z" fill="#555" /></svg>
              Layer Display Options
            </Disclosure>
          </Page>
          <Presets>
            <p>Presets (Ctrl+Tab):</p>
            <Combo $h={23}>
              <select aria-label="Presets"><option>All Layers</option></select>
              <Chevron />
            </Combo>
          </Presets>
          <PanelHead>Selection Filter</PanelHead>
          <Filters>{filters.map((f) => <Ticked key={f} label={f} />)}</Filters>
        </Panel>
      </Work>

      <Stats>{stats.map(([k, v]) => <div key={k}><dt>{k}</dt><dd>{v}</dd></div>)}</Stats>
      <Status>
        <Field $w={295} />
        <Field $w={78}>Z 1.40</Field>
        <Field $w={160}>{"X 177.8000  Y 45.7200"}</Field>
        <Field $w={251}>{"dx 177.8000  dy 45.7200  dist 183.5842"}</Field>
        <Field $w={184}>{"grid X 2.5400  Y 2.5400"}</Field>
        <Field $w={66}>mm</Field>
        <Field />
      </Status>

      <Taskbar>
        <Weather>
          <svg width="24" height="22" viewBox="0 0 24 22" aria-hidden="true">
            <circle cx="17" cy="9" r="7" fill="#f7a41c" /><circle cx="21" cy="3.500" r="3" fill="#c42b1c" />
            <path d="M6 20a5 5 0 01-1-10 6.500 6.500 0 0112-1 5.500 5.500 0 011 11z" fill="#dce8f8" />
          </svg>
          <div><span>90°F</span><span>Mostly cloudy</span></div>
        </Weather>
        <Apps>
          <AppTile aria-label="Start">{T.start}</AppTile>
          <AppTile aria-label="Search">{T.search}</AppTile>
          <AppTile aria-label="Task view">{T.tasks}</AppTile>
          <AppTile aria-label="Chat">{T.chat}</AppTile>
          <AppTile aria-label="File Explorer">{T.files}</AppTile>
          <AppTile aria-label="Edge">{T.edge}</AppTile>
          <AppTile aria-label="Chrome">{T.chrome}</AppTile>
          <AppTile aria-label="Chrome, second profile" $run={6}>{T.chrome}</AppTile>
          <AppTile aria-label="KiCad" $active $run={16}>{T.kicad}</AppTile>
        </Apps>
        <Tray>
          <svg width="12" height="8" fill="none" stroke="#fff" strokeWidth="1.300" aria-hidden="true"><path d="M1 7l5-5 5 5" /></svg>
          <svg width="16" height="14" viewBox="0 0 16 14" fill="none" stroke="#fff" strokeWidth="1.200" aria-hidden="true"><path d="M1 5c4-4.500 10-4.500 14 0M3 7.500c3-3.200 7-3.200 10 0M5.500 10c1.500-1.500 3.500-1.500 5 0" /><circle cx="8" cy="12" r="1" fill="#fff" /></svg>
          <svg width="16" height="14" viewBox="0 0 16 14" fill="none" stroke="#fff" strokeWidth="1.200" aria-hidden="true"><path d="M1 5h2.500L7 1.500v11L3.500 9H1zM9.500 5c1 1 1 3 0 4M11.500 3c2 2 2 6 0 8M13.500 1.500c3 3 3 8 0 11" /></svg>
          <svg width="17" height="12" viewBox="0 0 17 12" fill="none" stroke="#fff" strokeWidth="1.200" aria-hidden="true"><rect x="1" y="2" width="13" height="8" rx="2" /><path d="M15.500 4.500v3" /><path d="M3 4h4v4H3z" fill="#fff" stroke="none" /></svg>
          <Clock><span>2:06 PM</span><span>9/19/2022</span></Clock>
        </Tray>
      </Taskbar>

      <Dialog role="dialog" aria-label="Update PCB from Schematic">
        <DialogTitle>
          <span>Update PCB from Schematic</span>
          <button type="button" aria-label="Close dialog"><Cross /></button>
        </DialogTitle>
        <Group $m="10px 10px 0" $pb={6}>
          <legend>Options</legend>
          <Options>
            <Ticked h={20} off label="Re-link footprints to schematic symbols based on their reference designators" />
            <Ticked h={20} off label="Delete footprints with no symbols" />
            <Ticked h={20} label="Replace footprints with those specified in the schematic" />
          </Options>
        </Group>
        <Group $m="16px 10px 0" $pb={9}>
          <legend>Changes To Be Applied</legend>
          <ReportGrid>
            <Report>{report.map((line, i) => <p key={i}>{line}</p>)}</Report>
            <ScrollTrack $pad="156px 0 0 0"><Thumb $h={27} /></ScrollTrack>
            <ScrollTrack $pad="7px 44px 5px 0"><Thumb $w={542} /></ScrollTrack>
          </ReportGrid>
          <FilterRow>
            <span>Show:</span>
            <Ticked label="All" />
            <Ticked label="Errors" /><Pill>0</Pill>
            <Ticked label="Warnings" /><Pill>0</Pill>
            <Ticked label="Actions" />
            <Ticked label="Infos" />
            <Push type="button">Save...</Push>
          </FilterRow>
        </Group>
        <Actions>
          <Push type="button" $primary $w={82}>Update PCB</Push>
          <Push type="button">Close</Push>
        </Actions>
        <Grip width="8" height="8" fill="#b8b8b8" aria-hidden="true"><path d="M6 0h2v2H6zM3 3h2v2H3zM6 3h2v2H6zM0 6h2v2H0zM3 6h2v2H3zM6 6h2v2H6z" /></Grip>
      </Dialog>
    </Shell>
  );
}
